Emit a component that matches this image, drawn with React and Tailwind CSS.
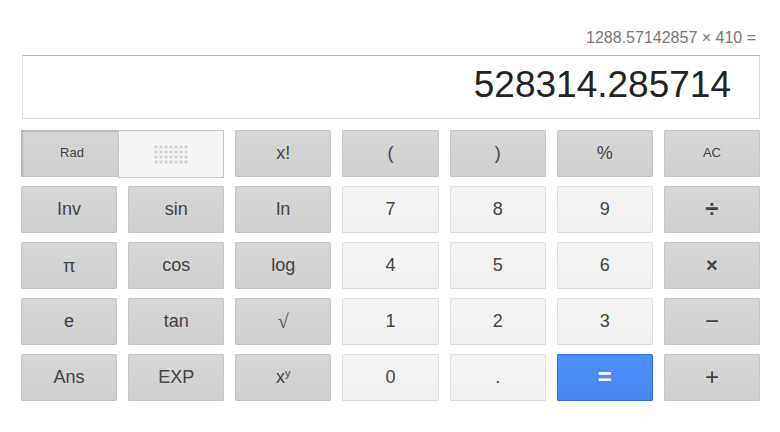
import React from "react";
import { clsx } from "clsx";

const KEY_STYLES = {
  dark: "border-[#c6c6c6] bg-linear-to-b from-[#d6d6d6] to-[#d0d0d0] text-[#444]",
  light: "border-[#dedede] bg-linear-to-b from-[#f5f5f5] to-[#f0f0f0] text-[#444]",
  blue: "border-[#2f72e8] bg-linear-to-b from-[#4d90fe] to-[#4787ed] text-white",
};

const KEYS = [
  { label: "x!" },
  { label: "(" },
  { label: ")" },
  { label: "%" },
  { label: "AC", size: "text-[13px]" },

  { label: "Inv" },
  { label: "sin" },
  { label: "ln" },
  { label: "7", variant: "light" },
  { label: "8", variant: "light" },
  { label: "9", variant: "light" },
  { label: "÷", size: "text-2xl font-bold" },

  { label: "π", size: "text-lg font-['Noto_Sans',sans-serif]" },
  { label: "cos" },
  { label: "log" },
  { label: "4", variant: "light" },
  { label: "5", variant: "light" },
  { label: "6", variant: "light" },
  { label: "×", size: "text-xl font-bold" },

  { label: "e" },
  { label: "tan" },
  { label: "√", size: "text-xl font-['Liberation_Serif',serif]" },
  { label: "1", variant: "light" },
  { label: "2", variant: "light" },
  { label: "3", variant: "light" },
  { label: "−", size: "text-2xl" },

  { label: "Ans" },
  { label: "EXP" },
  { label: "x", sup: "y" },
  { label: "0", variant: "light" },
  { label: ".", variant: "light" },
  { label: "=", variant: "blue", size: "text-2xl font-bold" },
  { label: "+", size: "text-2xl" },
];

const Key = ({ label, sup, variant = "dark", size = "text-lg" }) => (
  <button
    type="button"
    className={clsx(
      "flex h-[47px] items-center justify-center rounded-[1px] border pb-0.5 leading-none",
      KEY_STYLES[variant],
      size
    )}
  >
    <span>
      {label}
      {sup && <sup className="text-[11px]">{sup}</sup>}
    </span>
  </button>
);

const DotGrid = () => (
  <svg width="34" height="19" viewBox="0 0 34 19" aria-hidden="true">
    {[0, 5, 10, 15].map((y) =>
      [0, 5, 10, 15, 20, 25, 30].map((x) => (
        <g key={`${x}-${y}`}>
          <rect x={x} y={y} width="4" height="4" fill="#e9e9e9" />
          <rect x={x + 1} y={y + 1} width="2" height="2" fill="#cdcdcd" />
        </g>
      ))
    )}
  </svg>
);

export default function App() {
  return (
    <main className="bg-white pt-7 pr-5 pb-8 pl-[21px] font-['Liberation_Sans',Arial,sans-serif]">
      {/* Display */}
      <p className="pr-1 text-right text-base leading-5 text-[#777]">
        1288.57142857 × 410 =
      </p>
      <output className="mt-[7px] ml-px block h-16 border border-[#d9d9d9] border-t-[#b9b9b9] pr-7 text-right text-[37px] leading-[58px] text-[#222]">
        528314.285714
      </output>

      {/* Keypad */}
      <div className="mt-[11px] grid grid-cols-7 gap-x-[11px] gap-y-[9px]">
        <div className="col-span-2 flex">
          <button
            type="button"
            aria-pressed="true"
            className="h-[47px] w-[97px] border border-r-0 border-[#c6c6c6] border-t-[#b9b9b9] border-l-[#b9b9b9] bg-linear-to-b from-[#d6d6d6] to-[#d0d0d0] pb-0.5 pl-1 text-[13px] text-[#444] shadow-[inset_1px_1px_2px_rgba(0,0,0,0.15)]"
          >
            Rad
          </button>
          <button
            type="button"
            aria-label="Degrees"
            className="-mb-px flex h-12 flex-1 items-center justify-center border border-[#c6c6c6] bg-[#f5f5f5]"
          >
            <DotGrid />
          </button>
        </div>
        {KEYS.map((key) => (
          <Key key={key.label} {...key} />
        ))}
      </div>
    </main>
  );
}
